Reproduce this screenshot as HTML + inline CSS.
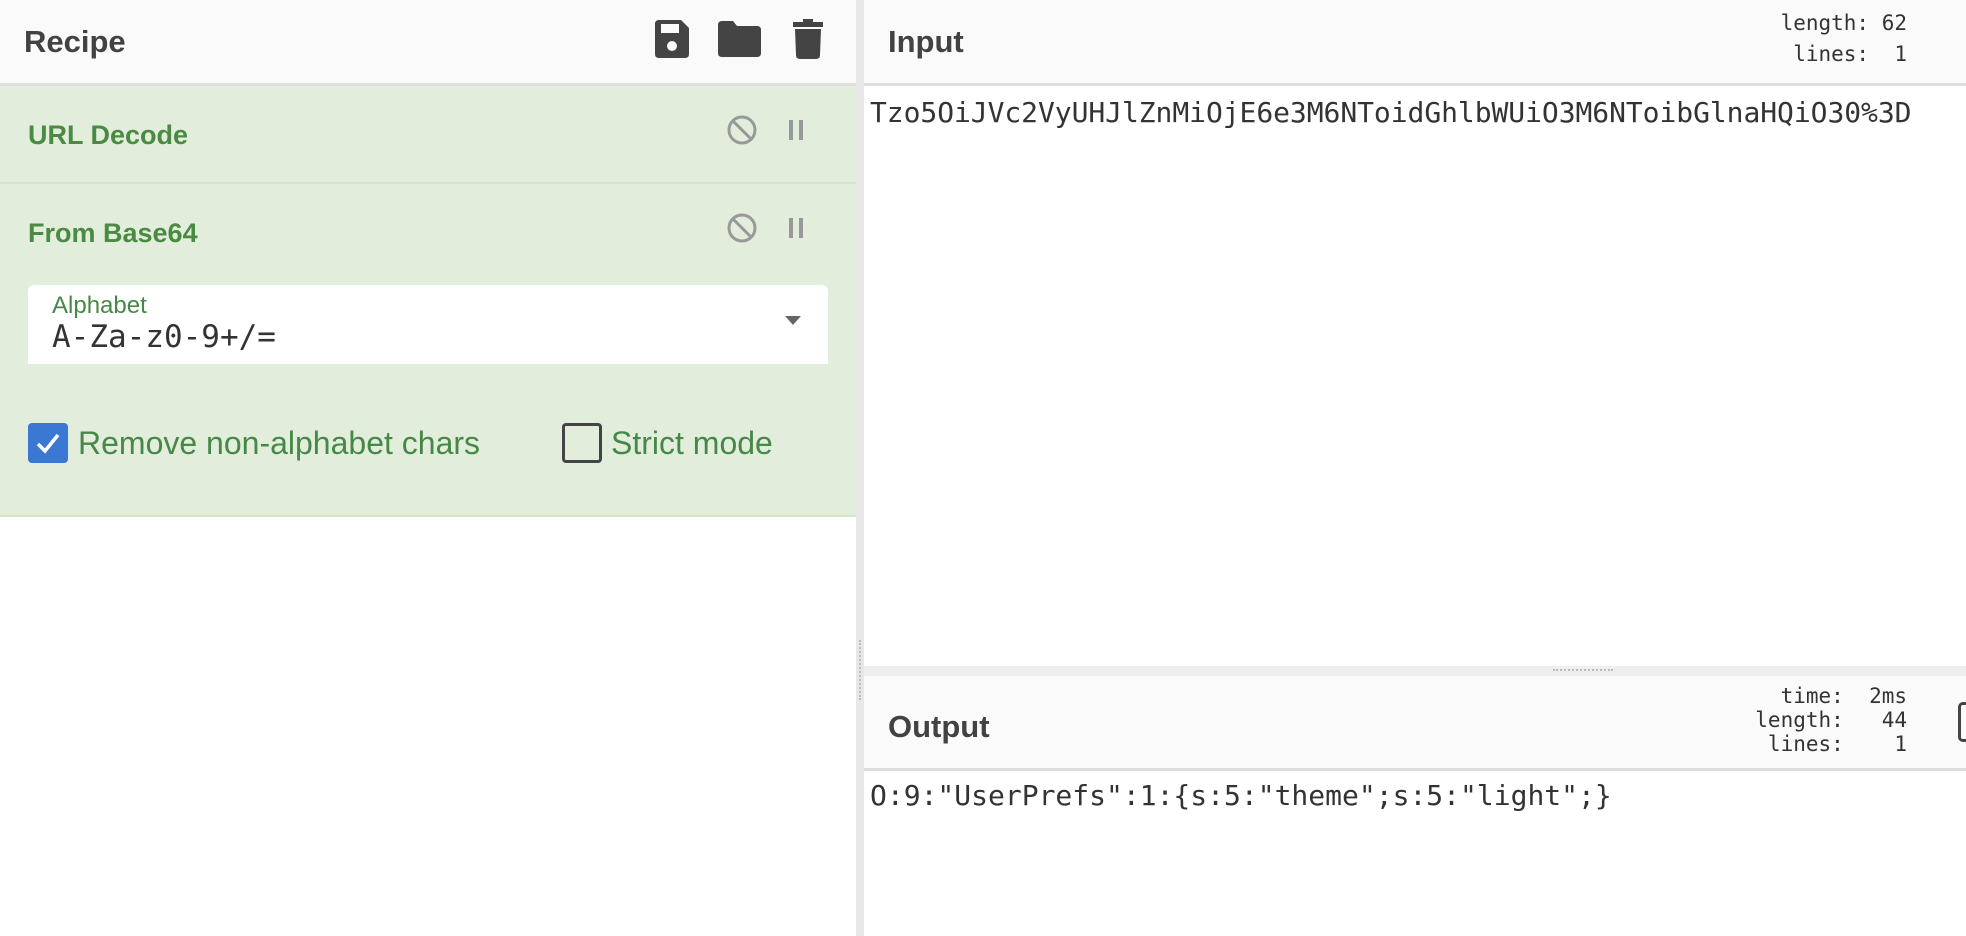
<!DOCTYPE html>
<html><head><meta charset="utf-8"><style>
*{box-sizing:border-box;margin:0;padding:0}
body{width:1966px;height:936px;overflow:hidden;background:#fff;font-family:"Liberation Sans",sans-serif;position:relative}
.abs{position:absolute}
.mono{font-family:"DejaVu Sans Mono","Liberation Mono",monospace}
.hdr{background:#fafafa;border-bottom:3px solid #ddd}
.title{font-weight:bold;font-size:31px;color:#424242}
.green{color:#468847}
.op{background:#e2eedb;border-bottom:2px solid #d3e6c8}
.optitle{font-weight:bold;font-size:27px;color:#4a8a42}
</style></head><body>
<div class="abs hdr" style="left:0;top:0;width:856px;height:86px"></div>
<div class="abs title" style="left:24px;top:24px">Recipe</div>
<svg class="abs" style="left:652px;top:19px" width="40" height="40" viewBox="0 0 40 40"><path d="M3 5 Q3 1 7 1 L29 1 L37 9 L37 35 Q37 39 33 39 L7 39 Q3 39 3 35Z" fill="#444"/><rect x="9" y="5" width="18" height="9" fill="#fafafa"/><circle cx="20" cy="27" r="5" fill="#fafafa"/></svg>
<svg class="abs" style="left:718px;top:21px" width="43" height="36" viewBox="0 0 43 36"><path d="M0 4 Q0 0 4 0 L15 0 L19 5 L39 5 Q43 5 43 9 L43 32 Q43 36 39 36 L4 36 Q0 36 0 32Z" fill="#444"/></svg>
<svg class="abs" style="left:793px;top:19px" width="30" height="40" viewBox="0 0 30 40"><rect x="0" y="3" width="30" height="5" fill="#444"/><rect x="10" y="0" width="10" height="4" fill="#444"/><path d="M2 10 L28 10 L27 36 Q27 40 23 40 L7 40 Q3 40 3 36Z" fill="#444"/></svg>

<div class="abs op" style="left:0;top:86px;width:856px;height:98px"></div>
<div class="abs optitle" style="left:28px;top:120px">URL Decode</div>
<div class="abs op" style="left:0;top:184px;width:856px;height:333px"></div>
<div class="abs optitle" style="left:28px;top:218px">From Base64</div>
<svg class="abs" style="left:726px;top:114px" width="32" height="32" viewBox="0 0 32 32"><circle cx="16" cy="16" r="13" fill="none" stroke="#999" stroke-width="3"/><line x1="7" y1="7" x2="25" y2="25" stroke="#999" stroke-width="3"/></svg>
<svg class="abs" style="left:787px;top:118px" width="20" height="24"><rect x="2" y="2" width="4" height="20" fill="#999"/><rect x="12" y="2" width="4" height="20" fill="#999"/></svg>
<svg class="abs" style="left:726px;top:212px" width="32" height="32" viewBox="0 0 32 32"><circle cx="16" cy="16" r="13" fill="none" stroke="#999" stroke-width="3"/><line x1="7" y1="7" x2="25" y2="25" stroke="#999" stroke-width="3"/></svg>
<svg class="abs" style="left:787px;top:216px" width="20" height="24"><rect x="2" y="2" width="4" height="20" fill="#999"/><rect x="12" y="2" width="4" height="20" fill="#999"/></svg>

<div class="abs" style="left:28px;top:285px;width:800px;height:79px;background:#fff;border-radius:6px 6px 0 0"></div>
<div class="abs green" style="left:52px;top:292px;font-size:24px">Alphabet</div>
<div class="abs mono" style="left:52px;top:319px;font-size:31px;color:#333">A-Za-z0-9+/=</div>
<svg class="abs" style="left:785px;top:316px" width="16" height="10"><path d="M0 0 L16 0 L8 9Z" fill="#666"/></svg>

<div class="abs" style="left:28px;top:423px;width:40px;height:40px;background:#3a78d4;border-radius:4px"></div>
<svg class="abs" style="left:28px;top:423px" width="40" height="40"><path d="M10 21 L17 28 L30 12" stroke="#fff" stroke-width="3.5" fill="none"/></svg>
<div class="abs green" style="left:78px;top:425px;font-size:32px">Remove non-alphabet chars</div>
<div class="abs" style="left:562px;top:423px;width:40px;height:40px;border:3px solid #444;border-radius:4px"></div>
<div class="abs green" style="left:611px;top:425px;font-size:32px">Strict mode</div>

<div class="abs" style="left:856px;top:0;width:8px;height:936px;background:#e8e8e8"></div>
<div class="abs" style="left:859px;top:640px;width:2px;height:60px;border-left:2px dotted #bbb"></div>

<div class="abs hdr" style="left:864px;top:0;width:1102px;height:86px"></div>
<div class="abs title" style="left:888px;top:24px">Input</div>
<div class="abs mono" style="left:1700px;top:8px;width:207px;text-align:right;font-size:21px;line-height:31px;color:#333;white-space:pre">length: 62
lines:  1</div>
<div class="abs mono" style="left:870px;top:96px;font-size:28px;color:#333;white-space:pre;letter-spacing:-0.06px">Tzo5OiJVc2VyUHJlZnMiOjE6e3M6NToidGhlbWUiO3M6NToibGlnaHQiO30%3D</div>

<div class="abs" style="left:864px;top:666px;width:1102px;height:10px;background:#eee"></div>
<div class="abs" style="left:1553px;top:669px;width:60px;height:3px;border-top:2px dotted #bbb"></div>
<div class="abs hdr" style="left:864px;top:676px;width:1102px;height:95px"></div>
<div class="abs title" style="left:888px;top:709px">Output</div>
<div class="abs mono" style="left:1650px;top:684px;width:257px;text-align:right;font-size:21px;line-height:24px;color:#333;white-space:pre">time:  2ms
length:   44
lines:    1</div>
<div class="abs" style="left:1958px;top:702px;width:20px;height:40px;border:3px solid #444;border-radius:5px"></div>
<div class="abs mono" style="left:870px;top:779px;font-size:28px;color:#333;white-space:pre">O:9:"UserPrefs":1:{s:5:"theme";s:5:"light";}</div>
</body></html>
